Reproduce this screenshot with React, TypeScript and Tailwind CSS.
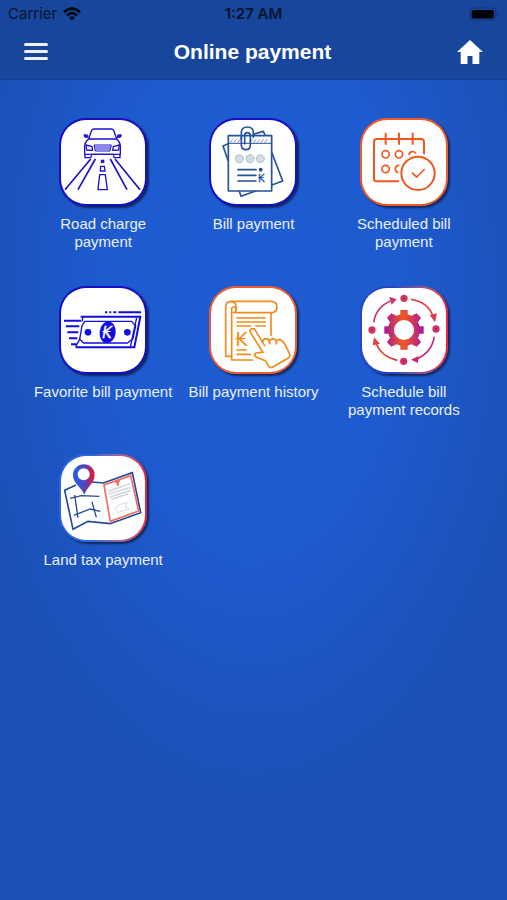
import type { ReactNode } from "react";

type Tile = {
  label: string;
  border: string;
  icon: ReactNode;
};

const BLUE = "#1a10d0";
const ORANGE = "#f0571f";
const AMBER = "#f08c1c";
const NAVY = "#23539a";

function RoadIcon() {
  return (
    <svg viewBox="33 31 252 252" className="size-full" fill="none" stroke={BLUE} strokeWidth="4" strokeLinejoin="round" aria-hidden="true">
      <path d="M116 88 L125 62 Q127 58 132 58 H184 Q189 58 191 62 L200 88 Z" />
      <path d="M116 88 Q105 96 104 108 V134 H211 V108 Q210 96 200 88" />
      <path d="M116 84 L105 84 Q99 80 102 74 L113 75 Z M200 84 L211 84 Q217 80 214 74 L203 75 Z" fill={BLUE} strokeWidth="1" />
      <path d="M108 106 L126 111 L128 122 L110 121 Z M208 106 L190 111 L188 122 L206 121 Z" />
      <path d="M132 106 H184 L180 124 H136 Z M134 112 H182 M136 118 H180" strokeWidth="3" />
      <path d="M105 135 V144 H122 L125 137 M210 135 V144 H193 L190 137 M124 134 H191" />
      <path d="M122 148 L45 240 M136 148 L84 240 M181 148 L231 240 M195 148 L270 240" strokeWidth="5" />
      <path d="M154 151 H162 V159 H153 Z" fill={BLUE} strokeWidth="2" />
      <path d="M152 170 H163 L165 184 H151 Z M149 195 H166 L172 240 H144 Z" />
    </svg>
  );
}

function BillIcon() {
  return (
    <svg viewBox="33 31 252 252" className="size-full" fill="none" stroke={NAVY} strokeWidth="5" strokeLinejoin="round" strokeLinecap="round" aria-hidden="true">
      <path d="M83 103 L69 109 L84 152 M160 74 L190 65 L195 76 M216 130 L248 214 L123 260 L118 245" />
      <path d="M85 78 H215 V244 H85 Z" fill="#fff" />
      <path d="M85 101 H215" strokeWidth="3" />
      <path d="M91 98 l7 -8 m4 8 l7 -8 m4 8 l7 -8 m30 8 l7 -8 m4 8 l7 -8 m4 8 l7 -8 m4 8 l7 -8 m4 8 l7 -8" strokeWidth="2" />
      <path d="M124 89 V69 Q124 52 142 52 Q160 52 160 69 V83" />
      <path d="M124 78 V106 Q124 120 138 120 Q151 120 151 106 V77 Q151 69 142 69 Q134 69 134 77 V102" />
      <g fill="#d7dddf" stroke="#abc4da" strokeWidth="3">
        <circle cx="118" cy="147" r="12" />
        <circle cx="150" cy="147" r="12" />
        <circle cx="181" cy="147" r="12" />
      </g>
      <path d="M114 180 H168 M114 197 H168 M114 214 H168" />
      <circle cx="182" cy="180" r="6" fill={NAVY} stroke="none" />
      <text x="174" y="217" fontFamily="DejaVu Sans" fontSize="32" fill={NAVY} stroke={NAVY} strokeWidth="1">₭</text>
    </svg>
  );
}

function CalendarIcon() {
  return (
    <svg viewBox="33 31 252 252" className="size-full" fill="none" stroke={ORANGE} strokeWidth="6" strokeLinecap="butt" aria-hidden="true">
      <path d="M144 215 H76 Q69 215 69 208 V97 Q69 88 78 88 H210 Q219 88 219 97 V134" />
      <path d="M104 69 V105 M144 69 V105 M185 69 V105" />
      <g strokeWidth="5">
        <circle cx="104" cy="134" r="11" />
        <circle cx="144" cy="134" r="11" />
        <path d="M174 136 A11 11 0 0 1 195 132" />
        <circle cx="104" cy="178" r="11" />
        <path d="M145 167 A11 11 0 0 0 143 189" />
      </g>
      <circle cx="201" cy="191" r="59" fill="#fff" stroke="none" />
      <circle cx="201" cy="191" r="50" />
      <path d="M183 189 L197 202 L221 178" strokeWidth="5" />
    </svg>
  );
}

function BanknoteIcon() {
  return (
    <svg viewBox="33 25 252 252" className="size-full" fill="none" stroke="#120ee0" strokeWidth="5" aria-hidden="true">
      <path d="M165 98 H172 M178 98 H184 M190 98 H199 M205 98 H273" strokeWidth="6" />
      <path d="M92 111 H271 L253 203 H77" strokeWidth="6" />
      <path d="M104 125 H244 L257 138 L249 177 L232 190 H101 L89 179 L96 138 Z" strokeWidth="4" />
      <path d="M96 126 L99 112 M77 201 L90 177 M260 114 L241 202" strokeWidth="4" />
      <path d="M42 123 H93 M48 140 H88 M52 158 H85 M57 176 H82 M63 194 H80" strokeWidth="6" />
      <ellipse cx="173" cy="158" rx="24" ry="33" transform="rotate(8 173 158)" fill="#120ee0" stroke="none" />
      <circle cx="114" cy="158" r="10" fill="#120ee0" stroke="none" />
      <circle cx="232" cy="158" r="10" fill="#120ee0" stroke="none" />
      <text x="157" y="175" fontFamily="DejaVu Sans" fontStyle="italic" fontSize="46" fill="#fff" stroke="#fff" strokeWidth="1">₭</text>
    </svg>
  );
}

function HistoryIcon() {
  return (
    <svg viewBox="33 25 252 252" className="size-full" fill="none" stroke={AMBER} strokeWidth="5" strokeLinejoin="round" strokeLinecap="round" aria-hidden="true">
      <path d="M94 230 H77 V82 Q77 65 94 65 H213 Q231 65 231 82 Q231 99 213 99 H100 Q109 99 109 85 Q109 67 95 67" />
      <path d="M95 85 Q103 76 108 88 M95 85 V241 H158 M213 101 V167" />
      <path d="M111 115 H196 M111 127 H196 M111 139 H151 M168 139 H196 M111 211 H139 M111 224 H151" />
      <text x="106" y="199" fontFamily="DejaVu Sans" fontSize="60" fill={AMBER} stroke="none">₭</text>
      <path d="M168 220 L189 218 L151 158 Q148 148 157 147 Q163 146 166 152 L188 188 Q188 177 199 177 Q207 178 208 187 Q211 176 222 178 Q230 180 229 187 Q231 178 239 180 Q249 183 258 200 L269 223 Q272 231 264 236 L217 263 Q211 266 206 259 L196 243 L170 233 Q159 227 168 220 Z" fill="#fff" />
      <path d="M188 188 L194 198 M208 187 L210 192 M229 187 V193" />
    </svg>
  );
}

function CycleIcon() {
  return (
    <svg viewBox="33 25 252 252" className="size-full" fill="none" aria-hidden="true">
      <defs>
        <linearGradient id="gear" x1="100" y1="0" x2="218" y2="0" gradientUnits="userSpaceOnUse">
          <stop offset="0" stopColor="#a2189e" />
          <stop offset="0.45" stopColor="#ee5726" />
          <stop offset="0.6" stopColor="#e64a3b" />
          <stop offset="1" stopColor="#a315a3" />
        </linearGradient>
        <linearGradient id="orbit" x1="65" y1="60" x2="250" y2="240" gradientUnits="userSpaceOnUse">
          <stop offset="0" stopColor="#c32775" />
          <stop offset="0.5" stopColor="#e94b34" />
          <stop offset="1" stopColor="#b71c90" />
        </linearGradient>
      </defs>
      <circle cx="159" cy="151" r="39" stroke="url(#gear)" strokeWidth="18" />
      <g fill="url(#gear)">
        <path d="M148 107 V91 H170 V107 Z M148 194 V210 H170 V194 Z M116 140 H100 V162 H116 Z M202 140 H218 V162 H202 Z" />
        <path d="M117 128 L108 114 L121 101 L140 110 Z M201 128 L210 114 L197 101 L178 110 Z M117 174 L108 188 L121 201 L140 192 Z M201 174 L210 188 L197 201 L178 192 Z" />
      </g>
      <g stroke="url(#orbit)" strokeWidth="5">
        <path d="M68 128 Q75 82 119 64 M180 59 Q232 67 247 112 M250 171 Q242 219 197 238 M139 242 Q91 231 75 190" />
      </g>
      <g fill="url(#orbit)">
        <path d="M115 51 L137 59 L122 75 Z M236 106 L258 101 L252 128 Z M202 229 L180 240 L201 250 Z M65 197 L69 173 L87 192 Z" />
        <circle cx="159" cy="56" r="11" />
        <circle cx="255" cy="148" r="11" />
        <circle cx="158" cy="245" r="11" />
        <circle cx="63" cy="151" r="11" />
      </g>
      <path d="M159 52 V60 M255 144 V152 M158 241 V249 M63 147 V155" stroke="#a71995" strokeWidth="4" />
    </svg>
  );
}

function LandIcon() {
  return (
    <svg viewBox="33 28 252 252" className="size-full" fill="none" stroke="#254a94" strokeWidth="5" aria-hidden="true">
      <defs>
        <linearGradient id="pin" x1="70" y1="0" x2="134" y2="0" gradientUnits="userSpaceOnUse">
          <stop offset="0.2" stopColor="#2a58df" />
          <stop offset="0.65" stopColor="#6a3ca0" />
          <stop offset="0.95" stopColor="#ee1932" />
        </linearGradient>
      </defs>
      <path d="M78 115 L44 131 L69 248 L114 224 L180 231 L272 198 L247 78 L160 109 L126 106" />
      <path d="M60 155 L94 147 L148 149 M74 145 L84 213 M72 206 L120 187 L151 194 M126 166 L139 212" strokeWidth="4" />
      <path d="M162 115 L242 87 L266 193 L181 224 Z" stroke="#f26c61" />
      <path d="M196 107 L209 102 M202 100 L204 117" stroke="#f26c61" strokeWidth="7" />
      <path d="M174 134 L239 112 M176 142 L241 122 M180 151 L241 131 M184 158 L235 141" stroke="#d3d5df" strokeWidth="5" />
      <path d="M196 187 L207 174 L231 167 L225 180 L237 187 L204 197 Z" stroke="#c0c8dc" strokeWidth="2" />
      <path d="M102 53 C83 53 69 67 69 86 C69 110 92 119 103 144 C112 119 134 109 134 85 C134 66 120 53 102 53 Z" fill="url(#pin)" stroke="none" />
      <circle cx="101" cy="83" r="18" fill="#fff" stroke="none" />
    </svg>
  );
}

const tiles: Tile[] = [
  { label: "Road charge\npayment", border: "bg-[#160fc4]", icon: <RoadIcon /> },
  { label: "Bill payment", border: "bg-[#160fc4]", icon: <BillIcon /> },
  { label: "Scheduled bill\npayment", border: "bg-[#ee5a2a]", icon: <CalendarIcon /> },
  { label: "Favorite bill payment", border: "bg-[#160fc4]", icon: <BanknoteIcon /> },
  { label: "Bill payment history", border: "bg-[#ea5a35]", icon: <HistoryIcon /> },
  { label: "Schedule bill\npayment records", border: "bg-linear-to-r from-[#2445c4] from-40% to-[#f01c38]", icon: <CycleIcon /> },
  { label: "Land tax payment", border: "bg-linear-to-r from-[#2867df] from-40% to-[#f01c38]", icon: <LandIcon /> },
];

function StatusBar() {
  return (
    <div className="grid h-7 grid-cols-3 items-center px-2 font-['Inter',sans-serif] text-[15px] text-[#07152f]">
      <div className="flex items-center gap-1.5">
        <span>Carrier</span>
        <svg viewBox="0 0 18 14" className="h-3.5 w-[18px]" fill="none" stroke="#020712" strokeWidth="2.6" aria-hidden="true">
          <path d="M1 5.2 Q9 -2 17 5.2 M4 8.4 Q9 4 14 8.4" />
          <path d="M6 10.4 Q9 8 12 10.4 L9 13.6 Z" fill="#020712" stroke="none" />
        </svg>
      </div>
      <span className="text-center font-semibold">1:27 AM</span>
      <svg viewBox="0 0 30 14" className="h-3.5 w-[30px] justify-self-end" aria-hidden="true">
        <rect x="0.7" y="1" width="26" height="12" rx="4" fill="none" stroke="#123579" strokeWidth="1.2" />
        <rect x="2.5" y="3" width="22.5" height="8.5" rx="2.5" fill="#000309" />
        <path d="M28 5 Q31 7 28 9 Z" fill="#123579" />
      </svg>
    </div>
  );
}

export default function App() {
  return (
    <div className="min-h-screen bg-[#1b51b6] bg-[radial-gradient(ellipse_56%_56%_at_50%_32%,#1e5cd3_0%,#1e5bd0_50%,#1b51b6_100%)] font-['Liberation_Sans',Arial,sans-serif]">
      <header className="border-b border-[#154092] bg-[#17469c]">
        <StatusBar />
        <div className="flex h-[51px] items-center justify-between px-6 pb-1">
          <button type="button" aria-label="Menu" className="flex w-6 flex-col gap-1">
            <span className="h-[3px] w-full rounded-xs bg-[#edf2fc]" />
            <span className="h-[3px] w-full rounded-xs bg-[#edf2fc]" />
            <span className="h-[3px] w-full rounded-xs bg-[#edf2fc]" />
          </button>
          <h1 className="text-[21px] leading-7 font-bold text-white">Online payment</h1>
          <a href="#home" aria-label="Home">
            <svg viewBox="0 0 26 24" className="h-6 w-[26px]" fill="#fff" aria-hidden="true">
              <path d="M13 0 L26 12 H22.3 V24 H15.5 V16 H10.5 V24 H3.7 V12 H0 Z" />
            </svg>
          </a>
        </div>
      </header>
      <main className="px-7 pt-[38px]">
        <ul className="grid grid-cols-3 gap-y-[35px]">
          {tiles.map((tile) => (
            <li key={tile.label}>
              <a href="#service" className="flex min-h-[133px] flex-col items-center gap-[9px]">
                <span className={`size-[88px] rounded-[27px] p-0.5 shadow-[2px_2px_2px_#10285f] ${tile.border}`}>
                  <span className="block size-full overflow-hidden rounded-[25px] bg-white">{tile.icon}</span>
                </span>
                <span className="text-center text-[15px] leading-[18px] whitespace-pre-line text-[#e9f0fc]">{tile.label}</span>
              </a>
            </li>
          ))}
        </ul>
      </main>
    </div>
  );
}
